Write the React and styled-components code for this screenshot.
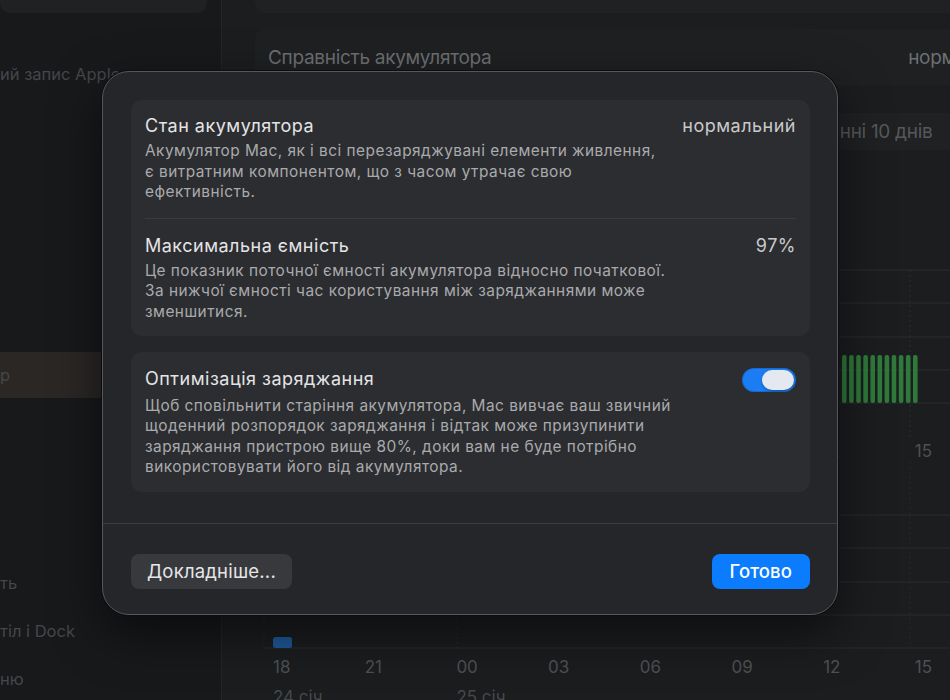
import React from "react";
import styled, { createGlobalStyle } from "styled-components";

const GlobalStyle = createGlobalStyle`
  html, body { margin: 0; padding: 0; background: #181a1c; }
  body { font-family: Inter, "Noto Sans", "Liberation Sans", sans-serif; -webkit-font-smoothing: antialiased; }
  * { box-sizing: border-box; }
`;

const Screen = styled.div`
  position: relative;
  width: 950px;
  height: 700px;
  overflow: hidden;
  display: flex;
  background: #1b1d1f;
`;

/* ---------- sidebar (background) ---------- */
const Sidebar = styled.aside`
  flex: 0 0 222px;
  display: flex;
  flex-direction: column;
  background: #17191b;
  border-right: 1px solid #232527;
  & > * { flex-shrink: 0; }
`;

const SearchField = styled.div`
  margin-top: -20px;
  width: 207px;
  height: 33px;
  border-radius: 10px;
  background: #1f2123;
`;

const SideGap = styled.div`
  height: ${(p) => p.$h}px;
`;

const SideItem = styled.div`
  height: ${(p) => p.$h || 48}px;
  display: flex;
  align-items: center;
  background: ${(p) => (p.$selected ? "#2a2725" : "transparent")};
  color: #45474a;
  font-size: 16.5px;
  white-space: nowrap;
  overflow: hidden;
`;

/* ---------- main (background) ---------- */
const Main = styled.main`
  flex: 0 0 812px;
  display: flex;
  flex-direction: column;
  padding: 0 10px 0 33px;
  & > * { flex-shrink: 0; }
`;

const TopCard = styled.div`
  margin-top: -20px;
  height: 33px;
  border-radius: 10px;
  background: #1f2123;
`;

const HealthCard = styled.div`
  margin-top: 16px;
  height: 56px;
  border-radius: 10px;
  background: #1e2022;
  display: flex;
  align-items: center;
  justify-content: space-between;
  padding: 0 14px 0 13px;
  font-size: 19px;
  color: #6d6f72;
  letter-spacing: -0.3px;
`;

const SegmentRow = styled.div`
  margin-top: 28px;
  display: flex;
  justify-content: flex-end;
`;

const Segment = styled.div`
  width: 300px;
  height: 37px;
  border-radius: 8px;
  background: #1f2123;
  display: flex;
  align-items: center;
  padding-left: 62px;
  font-size: 19px;
  color: #56585b;
  letter-spacing: -0.3px;
  white-space: nowrap;
`;

const ChartSvg = styled.svg`
  display: block;
`;

const AxisRow = styled.div`
  display: grid;
  grid-template-columns: repeat(8, 91.7px);
  padding-left: 18px;
  height: ${(p) => p.$h}px;
  align-items: center;
  font-size: 17px;
  color: #4e5053;
`;

const DateRow = styled.div`
  display: grid;
  grid-template-columns: 183.4px 183.4px;
  padding-left: 18px;
  height: 24px;
  align-items: center;
  font-size: 17px;
  color: #46484b;
`;

/* ---------- dialog ---------- */
const Dialog = styled.section`
  position: absolute;
  left: 102px;
  top: 71px;
  width: 736px;
  height: 544px;
  border-radius: 27px;
  background: #252629;
  border: 1px solid #55575b;
  box-shadow: 0 0 0 1px #0c0d0e, 0 18px 50px rgba(0, 0, 0, 0.55);
  display: flex;
  flex-direction: column;
`;

const DialogBody = styled.div`
  padding: 28px 27px 31px 28px;
  display: flex;
  flex-direction: column;
  gap: 16px;
`;

const Card = styled.div`
  background: #2c2d30;
  border-radius: 11px;
  padding: 0 14px;
`;

const Row = styled.div`
  display: grid;
  grid-template-columns: 1fr auto;
  padding: ${(p) => p.$pad};
  & + & {
    border-top: 1px solid #3a3b3e;
  }
`;

const Title = styled.div`
  font-size: 18px;
  line-height: 22px;
  color: #e4e4e6;
  letter-spacing: 0.5px;
`;

const Value = styled.div`
  font-size: 18px;
  line-height: 22px;
  color: #c9c9cb;
  text-align: right;
  letter-spacing: 0.5px;
`;

const Desc = styled.p`
  grid-column: 1 / -1;
  margin: 4px 0 0;
  font-size: 15.4px;
  line-height: 20.6px;
  color: #a9aaad;
  letter-spacing: 0.48px;
  white-space: nowrap;
`;

const Toggle = styled.div`
  width: 54px;
  height: 24px;
  border-radius: 12px;
  background: #1b7cf3;
  padding: 2px;
  display: flex;
  justify-content: flex-end;
  box-shadow: inset 0 0 0 1px rgba(0, 0, 0, 0.15);
`;

const Knob = styled.div`
  width: 32px;
  height: 20px;
  border-radius: 10px;
  background: #e3e8f1;
  box-shadow: 0 1px 2px rgba(0, 0, 0, 0.35);
`;

const Separator = styled.div`
  height: 1px;
  background: #3c3d40;
`;

const Footer = styled.div`
  padding: 30px 27px 0 28px;
  display: flex;
  justify-content: space-between;
`;

const Button = styled.button`
  height: 35px;
  border: none;
  border-radius: 8px;
  padding: 0 ${(p) => (p.$primary ? 18 : 16)}px;
  font-family: inherit;
  font-size: 18.5px;
  font-weight: ${(p) => (p.$primary ? 500 : 400)};
  color: ${(p) => (p.$primary ? "#ffffff" : "#e6e6e8")};
  background: ${(p) => (p.$primary ? "#0b7cfe" : "#38393c")};
  letter-spacing: ${(p) => (p.$primary ? "0.1px" : "0.2px")};
`;

const hours = ["18", "21", "00", "03", "06", "09", "12", "15"];

function LevelChart() {
  const ys = [120, 153, 187, 220, 253];
  const bars = [];
  for (let i = 0; i < 11; i++) bars.push(587 + i * 7.1);
  return (
    <ChartSvg width="779" height="290" viewBox="0 0 779 290">
      {ys.map((y) => (
        <line key={y} x1="9" x2="779" y1={y} y2={y} stroke="#2a2c2f" strokeWidth="1" />
      ))}
      <line x1="655" x2="655" y1="120" y2="290" stroke="#2c2e31" strokeDasharray="2 3" />
      {bars.map((x) => (
        <rect key={x} x={x} y="205" width="4.6" height="48" rx="2" fill="#2f7a3b" />
      ))}
    </ChartSvg>
  );
}

function UsageChart() {
  const ys = [53, 86, 120, 153, 186];
  return (
    <ChartSvg width="779" height="187" viewBox="0 0 779 187">
      {ys.map((y) => (
        <line key={y} x1="9" x2="779" y1={y} y2={y} stroke="#2a2c2f" strokeWidth="1" />
      ))}
      <line x1="9" x2="9" y1="0" y2="187" stroke="#26282b" strokeDasharray="2 3" />
      <line x1="202" x2="202" y1="0" y2="187" stroke="#26282b" strokeDasharray="2 3" />
      <line x1="655" x2="655" y1="0" y2="187" stroke="#26282b" strokeDasharray="2 3" />
      <rect x="18" y="175" width="19" height="11" rx="2.5" fill="#1f5a99" />
    </ChartSvg>
  );
}

export default function App() {
  return (
    <>
      <GlobalStyle />
      <Screen>
        <Sidebar>
          <SearchField />
          <SideGap $h={37} />
          <SideItem>ий запис Apple</SideItem>
          <SideGap $h={254} />
          <SideItem $selected $h={46}>р</SideItem>
          <SideGap $h={161} />
          <SideItem>ть</SideItem>
          <SideItem>тіл і Dock</SideItem>
          <SideItem>ню</SideItem>
        </Sidebar>

        <Main>
          <TopCard />
          <HealthCard>
            <span>Справність акумулятора</span>
            <span>нормальний</span>
          </HealthCard>
          <SegmentRow>
            <Segment>Останні 10 днів</Segment>
          </SegmentRow>
          <LevelChart />
          <AxisRow $h={22}>
            {hours.map((h) => (
              <span key={h}>{h}</span>
            ))}
          </AxisRow>
          <UsageChart />
          <AxisRow $h={36}>
            {hours.map((h) => (
              <span key={h}>{h}</span>
            ))}
          </AxisRow>
          <DateRow>
            <span>24 січ</span>
            <span>25 січ</span>
          </DateRow>
        </Main>

        <Dialog>
          <DialogBody>
            <Card>
              <Row $pad="15px 0 15px">
                <Title>Стан акумулятора</Title>
                <Value>нормальний</Value>
                <Desc>
                  Акумулятор Mac, як і всі перезаряджувані елементи живлення,
                  <br />є витратним компонентом, що з часом утрачає свою
                  <br />ефективність.
                </Desc>
              </Row>
              <Row $pad="16px 0 13px">
                <Title>Максимальна ємність</Title>
                <Value>97%</Value>
                <Desc>
                  Це показник поточної ємності акумулятора відносно початкової.
                  <br />За нижчої ємності час користування між заряджаннями може
                  <br />зменшитися.
                </Desc>
              </Row>
            </Card>
            <Card>
              <Row $pad="16px 0 14px">
                <Title>Оптимізація заряджання</Title>
                <Toggle>
                  <Knob />
                </Toggle>
                <Desc>
                  Щоб сповільнити старіння акумулятора, Mac вивчає ваш звичний
                  <br />щоденний розпорядок заряджання і відтак може призупинити
                  <br />заряджання пристрою вище 80%, доки вам не буде потрібно
                  <br />використовувати його від акумулятора.
                </Desc>
              </Row>
            </Card>
          </DialogBody>
          <Separator />
          <Footer>
            <Button>Докладніше...</Button>
            <Button $primary>Готово</Button>
          </Footer>
        </Dialog>
      </Screen>
    </>
  );
}
